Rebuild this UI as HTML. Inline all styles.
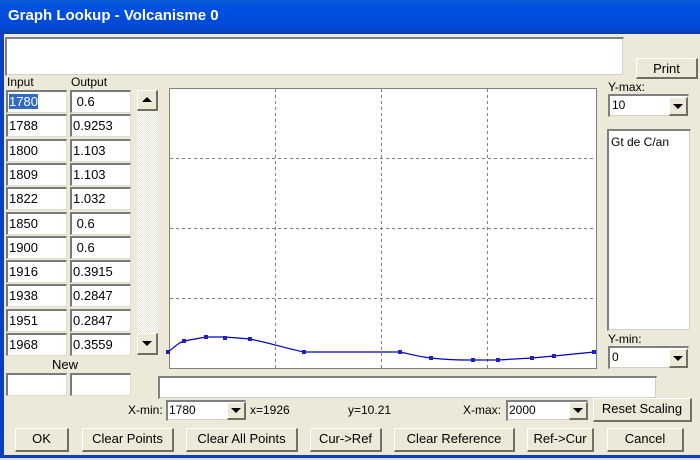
<!DOCTYPE html><html><head><style>
body{margin:0;width:700px;height:460px;overflow:hidden;background:#ece9d8;font-family:"Liberation Sans",sans-serif;font-size:12px;position:relative}
div{position:absolute;box-sizing:border-box}
.sunk{background:#fff;border-top:2px solid #808080;border-left:2px solid #808080;border-right:1px solid #ece9d8;border-bottom:1px solid #ece9d8;box-shadow:inset -1px -1px 0 #d4d0c8}
.cell{background:#fff;border-top:2px solid #7a7a7a;border-left:2px solid #7a7a7a;border-bottom:1px solid #e0ddd0;border-right:1px solid #e0ddd0;padding-left:1px;line-height:19px;width:61px;height:23px;font-size:13px}
.btn{background:#ece9d8;border-top:1px solid #fff;border-left:1px solid #fff;border-right:2px solid #716f64;border-bottom:2px solid #716f64;text-align:center;line-height:20px;height:24px}
.arr{width:0;height:0;border-left:5px solid transparent;border-right:5px solid transparent}
.lbl{white-space:nowrap}
</style></head><body>
<div style="left:0;top:0;width:700px;height:34px;background:linear-gradient(#0a5fd8,#0050e0 20%,#0349d6 80%,#0a3eb0)"></div>
<div style="left:8px;top:7px;color:#fff;font-weight:bold;font-size:15px" class="lbl">Graph Lookup - Volcanisme 0</div>
<div style="left:0;top:34px;width:4px;height:422px;background:#0a3fc0"></div>
<div style="left:0;top:455px;width:700px;height:3px;background:#0a3fc0"></div>
<div style="left:0;top:458px;width:700px;height:2px;background:#dde"></div>

<div class="sunk" style="left:5px;top:37px;width:619px;height:39px"></div>
<div class="btn" style="left:636px;top:58px;width:62px;height:21px;line-height:19px;font-size:13px">Print</div>

<div class="lbl" style="left:7px;top:75px">Input</div>
<div class="lbl" style="left:71px;top:75px">Output</div>

<div class="cell" style="left:6px;top:90px"><span style="background:#316ac5;color:#fff">1780</span></div><div class="cell" style="left:70px;top:90px">&nbsp;0.6</div>
<div class="cell" style="left:6px;top:114px">1788</div><div class="cell" style="left:70px;top:114px">0.9253</div>
<div class="cell" style="left:6px;top:139px">1800</div><div class="cell" style="left:70px;top:139px">1.103</div>
<div class="cell" style="left:6px;top:163px">1809</div><div class="cell" style="left:70px;top:163px">1.103</div>
<div class="cell" style="left:6px;top:187px">1822</div><div class="cell" style="left:70px;top:187px">1.032</div>
<div class="cell" style="left:6px;top:212px">1850</div><div class="cell" style="left:70px;top:212px">&nbsp;0.6</div>
<div class="cell" style="left:6px;top:236px">1900</div><div class="cell" style="left:70px;top:236px">&nbsp;0.6</div>
<div class="cell" style="left:6px;top:260px">1916</div><div class="cell" style="left:70px;top:260px">0.3915</div>
<div class="cell" style="left:6px;top:284px">1938</div><div class="cell" style="left:70px;top:284px">0.2847</div>
<div class="cell" style="left:6px;top:309px">1951</div><div class="cell" style="left:70px;top:309px">0.2847</div>
<div class="cell" style="left:6px;top:333px">1968</div><div class="cell" style="left:70px;top:333px">0.3559</div>
<div class="lbl" style="left:52px;top:357px;font-size:13px">New</div>
<div class="cell" style="left:6px;top:373px"></div><div class="cell" style="left:70px;top:373px"></div>

<div style="left:137px;top:90px;width:21px;height:265px;background:repeating-conic-gradient(#fff 0 25%,#e6e3d8 0 50%) 0 0/2px 2px"></div>
<div class="btn" style="left:137px;top:90px;width:21px;height:21px"><div class="arr" style="left:4px;top:6px;border-bottom:5px solid #000"></div></div>
<div class="btn" style="left:137px;top:333px;width:21px;height:22px"><div class="arr" style="left:4px;top:7px;border-top:5px solid #000"></div></div>

<svg style="position:absolute;left:0;top:0" width="700" height="460">
<rect x="169.5" y="88.5" width="427" height="280" fill="#fff" stroke="#808080"/>
<g stroke="#808080" stroke-dasharray="3,3">
<line x1="275.5" y1="89" x2="275.5" y2="368"/><line x1="381.5" y1="89" x2="381.5" y2="368"/><line x1="487.5" y1="89" x2="487.5" y2="368"/>
<line x1="170" y1="158.5" x2="596" y2="158.5"/><line x1="170" y1="228.5" x2="596" y2="228.5"/><line x1="170" y1="298.5" x2="596" y2="298.5"/>
</g>
<path d="M168,352 C176,346 178,343 184,341 L206,337 L225,337 L250,339 C270,343 285,348 304,352 L400,352 C410,354 420,357 431,358 C450,360 460,360 473,360 L498,360 L532,358 L554,356 L594,352" fill="none" stroke="#0000c0" stroke-width="1.2"/>
<g fill="#2020c0">
<rect x="166" y="350" width="4" height="4"/><rect x="182" y="339" width="4" height="4"/><rect x="204" y="335" width="4" height="4"/><rect x="223" y="336" width="4" height="4"/><rect x="248" y="337" width="4" height="4"/><rect x="302" y="350" width="4" height="4"/><rect x="398" y="350" width="4" height="4"/><rect x="429" y="356" width="4" height="4"/><rect x="471" y="358" width="4" height="4"/><rect x="496" y="358" width="4" height="4"/><rect x="530" y="356" width="4" height="4"/><rect x="552" y="354" width="4" height="4"/><rect x="592" y="350" width="4" height="4"/>
</g></svg>

<div class="lbl" style="left:608px;top:80px">Y-max:</div>
<div class="sunk" style="left:608px;top:94px;width:81px;height:23px;padding-left:2px;line-height:19px">10
<div class="btn" style="left:59px;top:1px;width:19px;height:19px"><div class="arr" style="left:3px;top:6px;border-top:5px solid #000"></div></div></div>
<div class="sunk" style="left:607px;top:129px;width:84px;height:202px;padding:4px 2px">Gt de C/an</div>
<div class="lbl" style="left:608px;top:332px">Y-min:</div>
<div class="sunk" style="left:608px;top:346px;width:81px;height:23px;padding-left:2px;line-height:19px">0
<div class="btn" style="left:59px;top:1px;width:19px;height:19px"><div class="arr" style="left:3px;top:6px;border-top:5px solid #000"></div></div></div>

<div class="sunk" style="left:158px;top:376px;width:499px;height:23px"></div>

<div class="lbl" style="left:128px;top:403px">X-min:</div>
<div class="sunk" style="left:166px;top:400px;width:80px;height:21px;padding-left:1px;line-height:17px">1780
<div class="btn" style="left:59px;top:0px;width:19px;height:18px"><div class="arr" style="left:3px;top:5px;border-top:5px solid #000"></div></div></div>
<div class="lbl" style="left:250px;top:403px">x=1926</div>
<div class="lbl" style="left:348px;top:403px">y=10.21</div>
<div class="lbl" style="left:463px;top:403px">X-max:</div>
<div class="sunk" style="left:506px;top:400px;width:82px;height:21px;padding-left:1px;line-height:17px">2000
<div class="btn" style="left:61px;top:0px;width:19px;height:18px"><div class="arr" style="left:3px;top:5px;border-top:5px solid #000"></div></div></div>
<div class="btn" style="left:593px;top:398px;width:99px;height:24px;font-size:13px">Reset Scaling</div>

<div class="btn" style="left:15px;top:428px;width:54px;font-size:13px">OK</div>
<div class="btn" style="left:82px;top:428px;width:92px;font-size:13px">Clear Points</div>
<div class="btn" style="left:186px;top:428px;width:112px;font-size:13px">Clear All Points</div>
<div class="btn" style="left:310px;top:428px;width:72px;font-size:13px">Cur-&gt;Ref</div>
<div class="btn" style="left:394px;top:428px;width:121px;font-size:13px">Clear Reference</div>
<div class="btn" style="left:527px;top:428px;width:67px;font-size:13px">Ref-&gt;Cur</div>
<div class="btn" style="left:607px;top:428px;width:77px;font-size:13px">Cancel</div>
</body></html>
